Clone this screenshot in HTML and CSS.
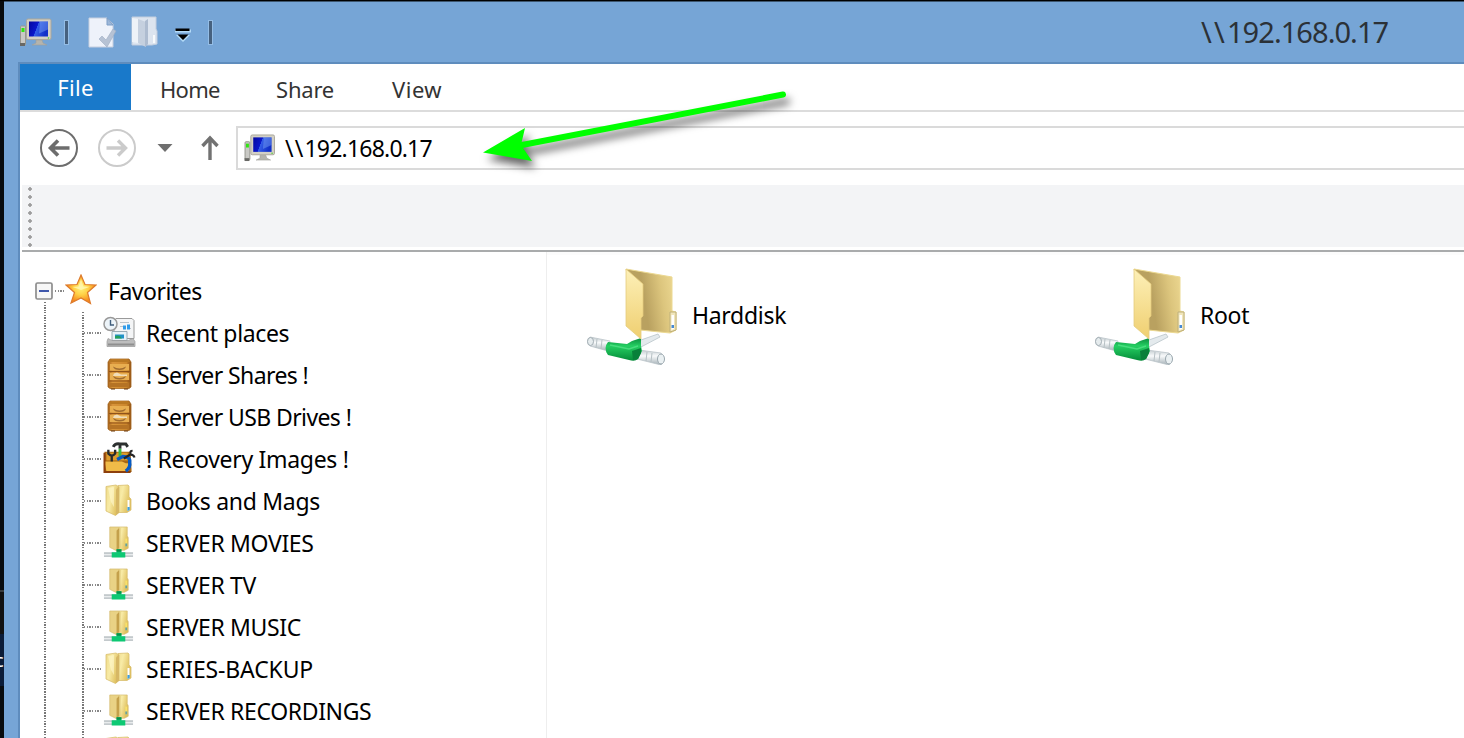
FILE: index.html
```html
<!DOCTYPE html>
<html lang="en">
<head>
    <meta charset="UTF-8">
    <meta name="viewport" content="width=device-width, initial-scale=1.0">
    <title>\\192.168.0.17</title>
    <link rel="stylesheet" href="styles.css">
</head>
<body>
    <!-- shared icons -->
    <svg class="defs" width="0" height="0">
        <defs>
            <linearGradient id="gold" x1="0" x2="1" y1="0" y2="0.4">
                <stop offset="0" stop-color="#eedb8a"/>
                <stop offset="0.45" stop-color="#f8eba6"/>
                <stop offset="1" stop-color="#dfbf5c"/>
            </linearGradient>
            <linearGradient id="inside" x1="0" x2="1" y1="0.2" y2="0">
                <stop offset="0.3" stop-color="#b9a160"/>
                <stop offset="0.65" stop-color="#dcc57d"/>
                <stop offset="1" stop-color="#f0dc96"/>
            </linearGradient>
            <linearGradient id="flap" x1="0" x2="0" y1="0" y2="1">
                <stop offset="0" stop-color="#fdf0b8"/>
                <stop offset="1" stop-color="#efcf70"/>
            </linearGradient>
            <linearGradient id="screen" x1="0" x2="1" y1="0" y2="0.3">
                <stop offset="0" stop-color="#0508a0"/>
                <stop offset="0.48" stop-color="#0b18cc"/>
                <stop offset="0.5" stop-color="#355fe8"/>
                <stop offset="1" stop-color="#1230c9"/>
            </linearGradient>
            <radialGradient id="starfill" cx="0.5" cy="0.45" r="0.5">
                <stop offset="0" stop-color="#fff27a"/>
                <stop offset="0.5" stop-color="#ffd045"/>
                <stop offset="1" stop-color="#f78a1c"/>
            </radialGradient>
            <linearGradient id="wood" x1="0" x2="1" y1="0" y2="0">
                <stop offset="0" stop-color="#a8641c"/>
                <stop offset="0.2" stop-color="#d8943a"/>
                <stop offset="0.8" stop-color="#cc872c"/>
                <stop offset="1" stop-color="#925214"/>
            </linearGradient>
            <linearGradient id="pipe" x1="0" x2="0" y1="0" y2="1">
                <stop offset="0" stop-color="#c4ccd0"/>
                <stop offset="0.4" stop-color="#f8fafb"/>
                <stop offset="1" stop-color="#a3afb5"/>
            </linearGradient>
            <linearGradient id="green" x1="0" x2="0" y1="0" y2="1">
                <stop offset="0" stop-color="#0c8c3f"/>
                <stop offset="0.35" stop-color="#25cf62"/>
                <stop offset="1" stop-color="#058a38"/>
            </linearGradient>

            <symbol id="pc" viewBox="0 0 32 29">
                <rect x="0.5" y="8" width="5" height="19" rx="1" fill="#c9c9c5" stroke="#96968f"/>
                <rect x="1.5" y="10" width="3" height="4" fill="#31e512"/>
                <path d="M0 28v-3h5v3z" fill="#686865"/>
                <path d="M16 22h6l1 3 4 2H12l4-2z" fill="#b5b4ad" stroke="#a09f9a" stroke-width=".6"/>
                <rect x="6.500" y="1" width="24.500" height="20.500" rx="1.500" fill="#d3d0c5" stroke="#aaa79c"/>
                <rect x="9" y="3.500" width="19" height="15" fill="url(#screen)"/>
                <path d="M20 3.500h8v8l-9 4z" fill="#7aa4f5" opacity=".45"/>
                <circle cx="28.500" cy="20" r=".8" fill="#4cd22f"/>
            </symbol>
            <symbol id="folder" viewBox="0 0 27 32">
                <path d="M13 1.500l10-.5 1 1v11l2 2v11l-4 2.500H11z" fill="url(#gold)" stroke="#d9bf70" stroke-width=".8"/>
                <path d="M1 2.500L11 1l3 2v25.500l-3.500 3L1 27z" fill="url(#gold)" stroke="#d9bf70" stroke-width=".8"/>
                <path d="M11 5.500l3-3v26l-3 2.500z" fill="#d6b765"/>
                <path d="M3 4l6-1v20L6 18z" fill="#fff9cf" opacity=".6"/>
                <path d="M22.500 16v11l2-1V16z" fill="#fff"/>
                <path d="M22.500 23h2.200v3l-2.200 1z" fill="#3e9fde"/>
            </symbol>
            <symbol id="netfolder" viewBox="0 0 30 33">
                <path d="M15 1h9v9l1 2v11l-4 2h-8z" fill="url(#gold)" stroke="#d4ba6c" stroke-width=".7"/>
                <path d="M6 1h9l1.500 1.500v20L13 25.500 6 22z" fill="#e9d285" stroke="#d4ba6c" stroke-width=".7"/>
                <path d="M13 5l2.500-3v21L13 25z" fill="#c4a04b"/>
                <path d="M22 13h2v8h-2z" fill="#f8e169"/>
                <path d="M22 18h2v3h-2z" fill="#67a0a0"/>
                <path d="M0 27h30v5H0z" fill="#c3c9cc"/>
                <path d="M0 29h30v1.200H0z" fill="#eef1f2"/>
                <path d="M13 24h5v3h4v5.500H8V27h5z" fill="#0dc873"/>
                <path d="M13 24h5v2.500h-5z" fill="#07904b"/>
            </symbol>
            <symbol id="cabinet" viewBox="0 0 25 32">
                <path d="M3 1h19l2 3v25l-2 1.500H3L1 29V4z" fill="url(#wood)" stroke="#a3661f" stroke-width=".8"/>
                <path d="M3.500 1.500h18L23 4H2z" fill="#b97822"/>
                <path d="M3 6h19v6.500H3zM3 15h19v7H3z" fill="#e8ae50"/>
                <path d="M2 13.500h21M2 23h21" stroke="#8f531a" stroke-width="1.200"/>
                <path d="M3 25h19v4H3z" fill="#b57325"/>
                <path d="M6 8.500q6.500 4 13 0-1 3.500-6.500 3.500T6 8.500zM6 18q6.500 4 13 0-1 3.500-6.500 3.500T6 18z" fill="#a06c30"/>
                <path d="M7 15.500l3-1 4 2h6v1.500H6z" fill="#f0ddb8"/>
                <path d="M4 31h4M17 31h4" stroke="#6a390b"/>
            </symbol>
            <symbol id="share" viewBox="0 0 92 98">
                <!-- cable -->
                <path d="M52 74l20-7 2 3-19 10z" fill="#e4eaed" stroke="#b9c4c9" stroke-width=".8"/>
                <path d="M4 70l20 4-2 10-18-5q-5-5 0-9z" fill="url(#pipe)" stroke="#b5bfc4" stroke-width=".7"/>
                <ellipse cx="4.500" cy="74.500" rx="3" ry="4" fill="#e6ecee" stroke="#a2adb3"/>
                <path d="M11 72l-1 9M16 73l-1 9" stroke="#b7c1c5"/>
                <path d="M53 83l22 3q5 5 0 12l-24-6z" fill="url(#pipe)" stroke="#b5bfc4" stroke-width=".7"/>
                <path d="M61 85l-1 9M66 86l-1 9" stroke="#b7c1c5"/>
                <ellipse cx="75" cy="92" rx="3.500" ry="5" fill="#eaf0f2" stroke="#9aa7ae"/>
                <path d="M22 75l19 2 5-3 9-3v8l1 5-4 8q-3 3-9 1l-21-5q-5-7 0-13z" fill="url(#green)"/>
                <path d="M24 78l19 4 9-3" fill="none" stroke="#59e58c" stroke-width="1.500" opacity=".7"/>
                <path d="M46 84l9-3v5l-3 6-5 1z" fill="#08803a"/>
                <!-- folder -->
                <path d="M40 2l46 8v34l4 1v18l-6 3-30-3z" fill="url(#inside)" stroke="#ecd992"/>
                <path d="M84 45h6v18l-6 2z" fill="#f1e6bb" stroke="#bfb07a"/>
                <path d="M85.500 48h2.500v14l-2.500 1z" fill="#fff"/>
                <path d="M85.500 58h2.500v3h-2.500z" fill="#4689d4"/>
                <path d="M40 2l17 15v32l-2 2v21L40 59z" fill="url(#flap)" stroke="#e4cc7d" stroke-width=".8"/>
            </symbol>
        </defs>
    </svg>

    <div class="desktop">
        <div class="desktop-edge">
            <div class="desktop-item">c</div>
        </div>

        <div class="window">
            <div class="titlebar">
                <div class="quick-access">
                    <svg class="qa-pc"><use href="#pc"/></svg>
                    <span class="separator"></span>
                    <svg class="qa-props" viewBox="0 0 29 31">
                        <path d="M1 1h18l6 6v23H1z" fill="#eef2fa" stroke="#c6cfdf"/>
                        <path d="M19 1v7h6z" fill="#9db7d8" stroke="#7d9ec7"/>
                        <path d="M11 22l3-3 4 4 7-11 3 2-9 16z" fill="#b6c2d4" stroke="#9dacc2" stroke-width=".6"/>
                    </svg>
                    <svg class="qa-new" viewBox="0 0 27 32">
                        <path d="M1 1h24v12l1 2v13l-5 1H1z" fill="#dce4ef" stroke="#c3cede"/>
                        <path d="M7 3l8 3v25l-8-4z" fill="#c5d0df"/>
                        <path d="M1 2l6 1v24l-6-1z" fill="#edf2f8"/>
                        <path d="M14 5l3-2v25l-3 3z" fill="#aebcd0"/>
                        <path d="M22 19h2v8h-2z" fill="#f8fafc"/>
                    </svg>
                    <svg class="qa-menu" viewBox="0 0 18 16">
                        <path d="M1 2.500h16v3H1zM2 8h14l-7 7z" fill="#b3daf7"/>
                        <path d="M1.500 1.500h14v2.500h-14zM3.500 7.500h11l-5.500 5.500z" fill="#000"/>
                    </svg>
                    <span class="separator"></span>
                </div>
                <h1 class="title"><span class="slashes">\\</span>192.168.0.17</h1>
            </div>

            <div class="content">
                <nav class="tabs">
                    <a class="tab file">File</a>
                    <a class="tab home">Home</a>
                    <a class="tab share">Share</a>
                    <a class="tab view">View</a>
                </nav>

                <div class="navigation">
                    <svg class="back" viewBox="0 0 40 40" fill="none" stroke="#6d6d6d">
                        <circle cx="20" cy="20" r="18" stroke-width="2"/>
                        <path d="M30.500 20H12M19 12.500L11.500 20l7.500 7.500" stroke-width="3.600"/>
                    </svg>
                    <svg class="forward" viewBox="0 0 40 40" fill="none" stroke="#cbcbcb">
                        <circle cx="20" cy="20" r="18" stroke-width="2"/>
                        <path d="M9.500 20H28M21 12.500l7.500 7.500-7.500 7.500" stroke-width="3.400"/>
                    </svg>
                    <svg class="history" viewBox="0 0 16 10"><path d="M.5 1h15L8 9z" fill="#6f6f6f"/></svg>
                    <svg class="up" viewBox="0 0 18 26" fill="none" stroke="#727272">
                        <path d="M9 25V3M1.500 11L9 3l7.500 8" stroke-width="3.400"/>
                    </svg>
                    <div class="address">
                        <svg class="address-icon"><use href="#pc"/></svg>
                        <span><span class="slashes">\\</span>192.168.0.17</span>
                    </div>
                </div>

                <div class="toolbar">
                    <div class="grip"></div>
                </div>

                <div class="panes">
                    <aside class="sidebar">
                        <div class="favorites">
                            <svg class="collapse" viewBox="0 0 18 18">
                                <rect x="1" y="1" width="16" height="16" rx="1.500" fill="#f7f7f7" stroke="#8d8d8d" stroke-width="1.700"/>
                                <path d="M4 9h10" stroke="#3f57ab" stroke-width="2"/>
                            </svg>
                            <span class="connector"></span>
                            <svg class="star" viewBox="0 0 32 31">
                                <path d="M16 1l4 9.500 11 .5-8.500 7.500 3 11L16 24l-10 5 3.500-10.500L1 11l11-.5z" fill="url(#starfill)" stroke="#dd7a2c" stroke-width="1.200"/>
                                <path d="M16 5l2.500 7.500 6.500.3-9 3.200-8.500-3 6-.5z" fill="#fffbc0" opacity=".7"/>
                            </svg>
                            <span class="label">Favorites</span>
                        </div>
                        <ul class="tree">
                            <li>
                                <svg class="icon recent" viewBox="0 0 33 31">
                                    <path d="M13 2h16l2 2v18H11V4z" fill="#f4f5f6" stroke="#9a9a9a"/>
                                    <path d="M17 6h9M17 10h4M24 12h4" stroke="#b9c3cb"/>
                                    <path d="M20 9h3v4h-3zM24 8h3v5h-3z" fill="#2e9bea"/>
                                    <path d="M9 15h15v9H9z" fill="#e7f2f8" stroke="#9aabb4"/>
                                    <path d="M12 18h9v4h-9z" fill="#2191c7"/>
                                    <path d="M12 20q4-3 7 2h-7z" fill="#22a05a"/>
                                    <path d="M5 22l4 2h16l5-2 2 3v5H4v-5z" fill="#bdbdbd" stroke="#999" stroke-width=".7"/>
                                    <path d="M5 28h26" stroke="#8f8f8f" stroke-width="2"/>
                                    <circle cx="7.500" cy="7.500" r="6.500" fill="#edf4f9" stroke="#999" stroke-width="1.500"/>
                                    <path d="M7.500 3.500v5h3.500" fill="none" stroke="#405e7c" stroke-width="1.400"/>
                                </svg>
                                <span class="label">Recent places</span>
                            </li>
                            <li>
                                <svg class="icon cabinet"><use href="#cabinet"/></svg>
                                <span class="label shares">! Server Shares !</span>
                            </li>
                            <li>
                                <svg class="icon cabinet"><use href="#cabinet"/></svg>
                                <span class="label usb">! Server USB Drives !</span>
                            </li>
                            <li>
                                <svg class="icon toolbox" viewBox="0 0 33 33">
                                    <path d="M1 10h27l1 21H1z" fill="#a76713"/>
                                    <path d="M3 11h22v8H3z" fill="#dd9b2b"/>
                                    <path d="M1 20h18l4 2h5l-2 8H3z" fill="#f0bb48"/>
                                    <path d="M1 11v20h27" fill="none" stroke="#8d3f0c" stroke-width="2"/>
                                    <path d="M5 8v4q4 4 7 0V8M8.500 13v7" fill="none" stroke="#262b2e" stroke-width="2.400"/>
                                    <path d="M10 5q2-4 7-3h6l2 3M17 2v5" fill="none" stroke="#2c302f" stroke-width="3"/>
                                    <path d="M17 7v8" stroke="#3cbb42" stroke-width="3"/>
                                    <path d="M14 18l6-3q8 0 7 6 1 5-4 9" fill="none" stroke="#075bc3" stroke-width="3.500"/>
                                    <path d="M21 17l8-5M28 12q-1-3 2-3M28 13q3 0 4 3" fill="none" stroke="#252525" stroke-width="2.200"/>
                                </svg>
                                <span class="label recovery">! Recovery Images !</span>
                            </li>
                            <li>
                                <svg class="icon folder"><use href="#folder"/></svg>
                                <span class="label recovery">Books and Mags</span>
                            </li>
                            <li>
                                <svg class="icon netfolder"><use href="#netfolder"/></svg>
                                <span class="label caps">SERVER MOVIES</span>
                            </li>
                            <li>
                                <svg class="icon netfolder"><use href="#netfolder"/></svg>
                                <span class="label caps">SERVER TV</span>
                            </li>
                            <li>
                                <svg class="icon netfolder"><use href="#netfolder"/></svg>
                                <span class="label caps">SERVER MUSIC</span>
                            </li>
                            <li>
                                <svg class="icon folder"><use href="#folder"/></svg>
                                <span class="label caps series">SERIES-BACKUP</span>
                            </li>
                            <li>
                                <svg class="icon netfolder"><use href="#netfolder"/></svg>
                                <span class="label caps">SERVER RECORDINGS</span>
                            </li>
                            <li>
                                <svg class="icon folder"><use href="#folder"/></svg>
                            </li>
                        </ul>
                    </aside>

                    <main class="files">
                        <div class="file-item">
                            <svg class="share-icon"><use href="#share"/></svg>
                            <span>Harddisk</span>
                        </div>
                        <div class="file-item">
                            <svg class="share-icon"><use href="#share"/></svg>
                            <span>Root</span>
                        </div>
                    </main>
                </div>
            </div>
        </div>

        <svg class="arrow" viewBox="0 0 340 100">
            <g fill="#00ff00">
                <path d="M52 65L313 14.500" stroke="#00ff00" stroke-width="6" stroke-linecap="round"/>
                <path d="M13 72.500L55 48l-4 17 11 16z"/>
            </g>
        </svg>
    </div>
</body>
</html>
```
FILE: styles.css
```css
* {
    box-sizing: border-box;
}

body {
    margin: 0;
    font-family: "Noto Sans", "Open Sans", sans-serif;
    font-size: 23px;
    color: #000;
    overflow: hidden;
}

h1, ul {
    margin: 0;
    padding: 0;
    font-weight: normal;
}

svg {
    display: block;
    flex: none;
}

.defs {
    position: absolute;
}

.desktop {
    position: relative;
    display: flex;
    width: 1464px;
    height: 738px;
    padding-top: 1px;
    background: #000;
    overflow: hidden;
}

.desktop-edge {
    width: 4px;
    padding-top: 589px;
    background: #080b0e;
    overflow: hidden;
    flex: none;
}

.desktop-item {
    height: 96px;
    padding-top: 42px;
    border-top: 2px solid #393c3f;
    background: linear-gradient(#111 42px, #0b1c38 42px);
    color: #fff;
    font-size: 18px;
    line-height: 52px;
    text-indent: -5px;
}

.window {
    flex: 1;
    min-width: 0;
    display: flex;
    flex-direction: column;
    background: #76a5d6;
    border-top: 1px solid #3d566f;
}

.titlebar {
    display: flex;
    height: 60px;
    padding-left: 16px;
}

.quick-access {
    display: flex;
    width: 1181px;
    align-items: center;
    flex: none;
}

.qa-pc {
    width: 32px;
    height: 29px;
}

.separator {
    width: 5px;
    height: 25px;
    margin-left: 12px;
    background: #46617f;
    border: solid #94bde6;
    border-width: 1px 1.5px;
}

.qa-props {
    width: 29px;
    height: 31px;
    margin-left: 19px;
}

.qa-new {
    width: 27px;
    height: 32px;
    margin-left: 14px;
}

.qa-menu {
    width: 18px;
    height: 16px;
    margin: 6px 4px 0 16px;
}

.title {
    font-size: 29px;
    line-height: 60px;
    color: #2b3137;
    letter-spacing: -0.95px;
}

.title .slashes {
    letter-spacing: 2.2px;
}

.content {
    flex: 1;
    min-height: 0;
    display: flex;
    flex-direction: column;
    margin-left: 14px;
    border-left: 2px solid #5e8cbd;
    border-top: 2px solid #5e8cbd;
    background: #fff;
}

.tabs {
    display: flex;
    height: 48px;
    flex: none;
    border-bottom: 2px solid #dcdcdc;
    font-size: 22px;
    color: #333;
}

.tab {
    line-height: 50px;
    flex: none;
}

.file {
    width: 111px;
    height: 46px;
    line-height: 46px;
    background: #1979ca;
    color: #fff;
    text-align: center;
    letter-spacing: 0.3px;
}

.home {
    width: 116px;
    padding-left: 29px;
    letter-spacing: -0.7px;
}

.share {
    width: 116px;
    padding-left: 29px;
    letter-spacing: -0.2px;
}

.view {
    padding-left: 29px;
    letter-spacing: 0.5px;
}

.navigation {
    display: flex;
    height: 73px;
    flex: none;
    align-items: center;
    padding: 0 0 2px 19px;
}

.back, .forward {
    width: 40px;
    height: 40px;
}

.forward {
    margin-left: 18px;
}

.history {
    width: 16px;
    height: 10px;
    margin-left: 20px;
}

.up {
    width: 18px;
    height: 26px;
    margin-left: 28px;
}

.address {
    display: flex;
    align-items: center;
    align-self: flex-start;
    flex: 1;
    height: 44px;
    margin: 14px -2px 0 17px;
    border: 2px solid #dadada;
    letter-spacing: -0.8px;
}

.address .slashes {
    letter-spacing: 1.2px;
}

.address-icon {
    width: 32px;
    height: 28px;
    margin: 0 9px 0 6px;
}

.toolbar {
    height: 67px;
    flex: none;
    margin-left: 2px;
    padding: 2px 0 0 6px;
    background: linear-gradient(#f3f4f6 62px, #fff 62px);
    border-bottom: 2px solid #a9abac;
}

.grip {
    width: 4px;
    height: 60px;
    background: radial-gradient(circle, #9d9d9d 1.5px, transparent 2px) 0 -2px / 4px 8px;
}

.panes {
    display: flex;
    flex: 1;
    min-height: 0;
}

.sidebar {
    width: 527px;
    flex: none;
    padding-top: 18px;
    border-right: 1px solid #eee;
    overflow: hidden;
}

.favorites {
    display: flex;
    align-items: center;
    height: 42px;
    padding-left: 15px;
    background: repeating-linear-gradient(#777 0 1.4px, #fff 1.4px 2.67px) 24px 32px / 2px 10px no-repeat;
}

.collapse {
    width: 18px;
    height: 18px;
}

.connector {
    width: 11px;
    height: 2px;
    margin: 0 0 0 2px;
    background: repeating-linear-gradient(90deg, #888 0 1.4px, #fff 1.4px 2.67px);
}

.star {
    width: 32px;
    height: 31px;
    margin: -3px 0 0 -1px;
}

.label {
    white-space: nowrap;
    letter-spacing: -0.5px;
}

.favorites .label {
    margin-left: 11px;
}

.tree {
    list-style: none;
    margin-left: 24px;
    padding-left: 37px;
    background:
        repeating-linear-gradient(#777 0 1.4px, #fff 1.4px 2.67px) 0 0 / 2px 100% no-repeat,
        repeating-linear-gradient(#777 0 1.4px, #fff 1.4px 2.67px) 38px 0 / 2px 100% no-repeat;
}

.tree li {
    display: flex;
    align-items: center;
    height: 42px;
}

.tree li::before {
    content: "";
    width: 19px;
    height: 2px;
    margin-left: 3px;
    background: repeating-linear-gradient(90deg, #888 0 1.4px, #fff 1.4px 2.67px);
    flex: none;
}

.icon {
    width: 33px;
    height: 32px;
    margin-top: -2px;
}

.netfolder, .folder {
    margin-left: -1px;
    margin-right: 1px;
}

.tree .label {
    margin-left: 10px;
    letter-spacing: -0.35px;
}

.tree .shares, .tree .usb {
    letter-spacing: -0.6px;
}

.tree .recovery {
    letter-spacing: -0.3px;
}

.tree .caps {
    letter-spacing: -0.36px;
}

.tree .series {
    letter-spacing: -0.15px;
}

.files {
    flex: 1;
    min-width: 0;
    display: flex;
    padding: 12px 0 0 39px;
    border-top: 3px solid #fcfcfc;
}

.file-item {
    display: flex;
    width: 508px;
    height: 98px;
    flex: none;
    letter-spacing: -0.3px;
    line-height: 96px;
}

.share-icon {
    width: 92px;
    height: 98px;
    margin-right: 14px;
}

.arrow {
    position: absolute;
    left: 470px;
    top: 80px;
    width: 340px;
    height: 100px;
    overflow: visible;
    filter: drop-shadow(4px 7px 4px rgba(0, 0, 0, 0.6));
}
```
